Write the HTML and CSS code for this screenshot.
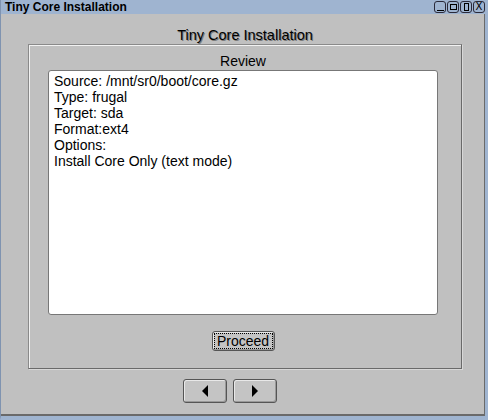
FILE: index.html
```html
<!DOCTYPE html>
<html lang="en">
<head>
  <meta charset="UTF-8" />
  <title>Tiny Core Installation</title>
  <link rel="stylesheet" href="styles.css">
</head>
<body>
  <div class="window">
    <div class="title-bar">
      <span class="title">Tiny Core Installation</span>
      <div class="win-btns">
        <span class="win-btn"><i class="line"></i></span>
        <span class="win-btn"><i class="sq"></i></span>
        <span class="win-btn"><i class="tall"></i></span>
        <span class="win-btn">X</span>
      </div>
    </div>

    <div class="client">
      <h1 class="heading">Tiny Core Installation</h1>

      <div class="group">
        <div class="group-label">Review</div>
        <div class="review-box">
          <div>Source: /mnt/sr0/boot/core.gz</div>
          <div>Type: frugal</div>
          <div>Target: sda</div>
          <div>Format:ext4</div>
          <div>Options:</div>
          <div>Install Core Only (text mode)</div>
        </div>
        <div class="proceed-row">
          <button class="btn proceed"><span>Proceed</span></button>
        </div>
      </div>

      <div class="nav-row">
        <button class="btn nav-btn" aria-label="back">
          <svg width="8" height="12" viewBox="0 0 8 12"><polygon points="7,0 7,12 1,6" fill="#000"/></svg>
        </button>
        <button class="btn nav-btn" aria-label="next">
          <svg width="8" height="12" viewBox="0 0 8 12"><polygon points="1,0 1,12 7,6" fill="#000"/></svg>
        </button>
      </div>
    </div>
  </div>
</body>
</html>
```

FILE: styles.css
```css
* { box-sizing: border-box; margin: 0; padding: 0; }
body {
  font-family: "Liberation Sans", "DejaVu Sans", sans-serif;
  background: #c0c0c0;
  width: 488px;
  height: 420px;
  overflow: hidden;
}
.window {
  width: 488px;
  height: 420px;
  display: flex;
  flex-direction: column;
  background: #c0c0c0;
  border-left: 1px solid #7f93b0;
  border-right: 3px solid #9fb4d0;
  border-bottom: 4px solid #9fb4d0;
  position: relative;
}
.window::after {
  content: "";
  position: absolute;
  left: 0;
  right: 0;
  bottom: 0;
  top: 14px;
  border-right: 1px solid #6a6a6a;
  border-bottom: 2px solid #6a6a6a;
  pointer-events: none;
}
.title-bar {
  height: 14px;
  background: #9fb4d0;
  display: flex;
  align-items: center;
  justify-content: space-between;
  padding-left: 4px;
}
.title {
  font-family: "Liberation Sans", sans-serif;
  font-weight: bold;
  font-size: 12px;
  color: #000;
  line-height: 14px;
}
.win-btns {
  display: flex;
  gap: 1px;
}
.win-btn {
  width: 12px;
  height: 12px;
  border: 1px solid #2a2a3a;
  border-radius: 3px;
  font-size: 10px;
  line-height: 10px;
  font-family: "DejaVu Sans", sans-serif;
  color: #000;
  display: flex;
  align-items: center;
  justify-content: center;
}
.win-btn .line {
  width: 7px;
  height: 1px;
  background: #000;
  margin-top: 6px;
}
.win-btn .sq {
  width: 7px;
  height: 6px;
  border: 1px solid #000;
}
.win-btn .tall {
  width: 5px;
  height: 8px;
  border: 1px solid #000;
}
.client {
  flex: 1;
  display: flex;
  flex-direction: column;
  padding: 0 23px 0 27px;
}
.heading {
  height: 30px;
  padding-top: 13px;
  font-size: 14.5px;
  font-weight: normal;
  text-align: center;
  color: #000;
  line-height: 16px;
  text-shadow: 1px 1px 0 #7a7a7a;
}
.group {
  height: 325px;
  border-top: 1px solid #8a8a8a;
  border-left: 1px solid #8a8a8a;
  border-right: 1px solid #6a6a6a;
  border-bottom: 1px solid #6a6a6a;
  box-shadow: inset 1px 1px 0 #f2f2f2, 1px 1px 0 #d8d8d8;
  display: flex;
  flex-direction: column;
  padding: 8px 23px 0 19px;
}
.group-label {
  font-size: 14px;
  line-height: 16px;
  text-align: center;
  height: 17px;
  color: #000;
}
.review-box {
  height: 245px;
  background: #fff;
  border: 1px solid #777;
  border-radius: 3px;
  padding: 2px 5px;
  font-size: 14px;
  line-height: 16px;
  color: #000;
}
.proceed-row {
  display: flex;
  justify-content: center;
  padding-top: 16px;
}
.btn {
  background: #c4c4c4;
  border: 1px solid #555;
  border-radius: 3px;
  box-shadow: inset 1px 1px 0 #e8e8e8, inset -1px -1px 0 #999;
  font-family: "Liberation Sans", sans-serif;
  color: #000;
  cursor: pointer;
}
.proceed {
  width: 63px;
  height: 20px;
  font-size: 14px;
  line-height: 14px;
  padding: 1px;
}
.proceed span {
  display: block;
  border: 1px dotted #000;
  height: 16px;
  line-height: 15px;
}
.nav-row {
  display: flex;
  justify-content: center;
  gap: 6px;
  padding-top: 10px;
  padding-right: 30px;
}
.nav-btn {
  width: 44px;
  height: 24px;
  display: flex;
  align-items: center;
  justify-content: center;
}
```
